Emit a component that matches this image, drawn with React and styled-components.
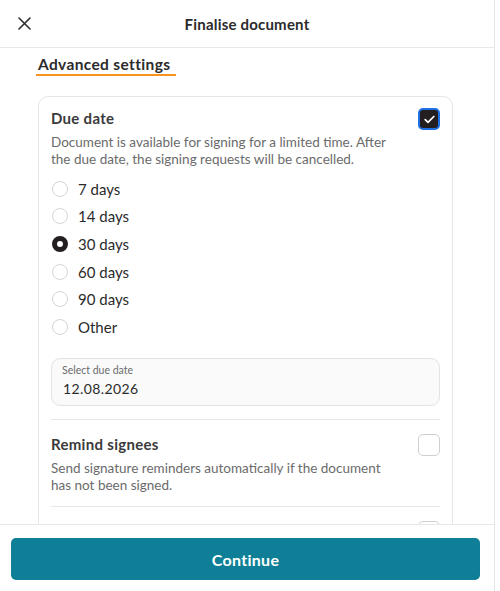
import React, { useState } from "react";
import styled, { createGlobalStyle } from "styled-components";

const GlobalStyle = createGlobalStyle`
  html, body {
    margin: 0;
    padding: 0;
    background: #ffffff;
  }
  body {
    font-family: "Lato", "Noto Sans", sans-serif;
    color: #2b2b2b;
  }
  * {
    box-sizing: border-box;
  }
`;

const Panel = styled.div`
  width: 495px;
  height: 591px;
  border-right: 1px solid #e6e6e6;
  display: flex;
  flex-direction: column;
  background: #fff;
  overflow: hidden;
`;

const Header = styled.header`
  height: 48px;
  flex-shrink: 0;
  display: grid;
  grid-template-columns: 48px 1fr 48px;
  align-items: center;
  border-bottom: 1px solid #e8e8e8;
`;

const CloseButton = styled.button`
  width: 48px;
  height: 46px;
  border: none;
  background: none;
  padding: 0;
  display: flex;
  align-items: center;
  justify-content: center;
  cursor: pointer;
  color: #2b2b2b;
`;

const HeaderTitle = styled.h1`
  margin: 0;
  text-align: center;
  font-size: 15px;
  font-weight: 700;
  color: #2b2b2b;
  letter-spacing: 0.2px;
`;

const Body = styled.div`
  flex: 1;
  overflow: hidden;
  padding: 6px 41px 0 38px;
`;

const SectionTitle = styled.h2`
  display: inline-block;
  margin: 0 0 0 -2px;
  padding: 0 6px 1px 2px;
  font-size: 15.5px;
  font-weight: 700;
  color: #2b2b2b;
  letter-spacing: 0.35px;
  border-bottom: 2px solid #f7941d;
  line-height: 18px;
`;

const Card = styled.section`
  margin-top: 20px;
  border: 1px solid #e6e6e6;
  border-radius: 10px;
  padding: 11px 12px 0 12px;
`;

const Setting = styled.div`
  padding-top: ${(p) => p.$top || "0"};
  padding-bottom: ${(p) => p.$bottom || "13px"};
  border-bottom: ${(p) => (p.$last ? "none" : "1px solid #e8e8e8")};
`;

const SettingHead = styled.div`
  display: flex;
  justify-content: space-between;
  align-items: flex-start;
  min-height: 22px;
`;

const SettingTitle = styled.h3`
  margin: 0;
  font-size: 15px;
  font-weight: 700;
  color: #3a3a3a;
  line-height: 20px;
  letter-spacing: 0.3px;
`;

const SettingText = styled.p`
  margin: 4px 0 0;
  max-width: 340px;
  font-size: 13.5px;
  line-height: 17px;
  color: #6b6b6b;
`;

const Check = styled.span`
  flex-shrink: 0;
  width: 22px;
  height: 22px;
  margin-left: auto;
  border-radius: 5px;
  display: flex;
  align-items: center;
  justify-content: center;
  background: ${(p) => (p.$on ? "#231f20" : "#fff")};
  border: ${(p) => (p.$on ? "2px solid #1f6fe5" : "1px solid #cfcfcf")};
  cursor: pointer;
`;

const RadioList = styled.div`
  margin-top: 7px;
  display: flex;
  flex-direction: column;
`;

const RadioRow = styled.label`
  height: 27.6px;
  display: flex;
  align-items: center;
  gap: 10px;
  font-size: 15px;
  color: #2b2b2b;
  cursor: pointer;
`;

const RadioDot = styled.span`
  width: 16px;
  height: 16px;
  border-radius: 50%;
  margin-left: 1px;
  border: ${(p) => (p.$on ? "5px solid #231f20" : "1px solid #d4d4d4")};
  background: #fff;
`;

const DateField = styled.div`
  margin-top: 17px;
  height: 48px;
  border: 1px solid #e3e3e3;
  border-radius: 9px;
  background: #fafafa;
  padding: 5px 10px 0;
`;

const DateLabel = styled.div`
  font-size: 10.5px;
  color: #6b6b6b;
  line-height: 13px;
`;

const DateValue = styled.div`
  margin-top: 3px;
  padding-left: 1px;
  font-size: 14px;
  color: #2b2b2b;
  letter-spacing: 0.4px;
`;

const Footer = styled.footer`
  flex-shrink: 0;
  height: 67px;
  border-top: 1px solid #e8e8e8;
  padding: 13px 14px 0 11px;
  background: #fff;
`;

const PrimaryButton = styled.button`
  width: 100%;
  height: 42px;
  border: none;
  border-radius: 5px;
  background: #0e7f96;
  color: #fff;
  font-family: inherit;
  font-size: 16px;
  font-weight: 700;
  letter-spacing: 0.3px;
  cursor: pointer;
`;

const CloseIcon = () => (
  <svg width="13" height="13" viewBox="0 0 13 13" fill="none">
    <path d="M1 1L12 12M12 1L1 12" stroke="#2b2b2b" strokeWidth="1.6" strokeLinecap="round" />
  </svg>
);

const TickIcon = () => (
  <svg width="11" height="9" viewBox="0 0 11 9" fill="none">
    <path d="M1.2 4.6L4 7.3L9.8 1.5" stroke="#fff" strokeWidth="1.7" strokeLinecap="round" strokeLinejoin="round" />
  </svg>
);

const options = ["7 days", "14 days", "30 days", "60 days", "90 days", "Other"];

export default function App() {
  const [due, setDue] = useState("30 days");

  return (
    <Panel>
      <GlobalStyle />
      <Header>
        <CloseButton aria-label="Close">
          <CloseIcon />
        </CloseButton>
        <HeaderTitle>Finalise document</HeaderTitle>
        <span />
      </Header>

      <Body>
        <SectionTitle>Advanced settings</SectionTitle>
        <Card>
          <Setting $bottom="13px">
            <SettingHead>
              <SettingTitle>Due date</SettingTitle>
              <Check $on>
                <TickIcon />
              </Check>
            </SettingHead>
            <SettingText>
              Document is available for signing for a limited time. After the due date, the signing
              requests will be cancelled.
            </SettingText>
            <RadioList>
              {options.map((o) => (
                <RadioRow key={o} onClick={() => setDue(o)}>
                  <RadioDot $on={due === o} />
                  {o}
                </RadioRow>
              ))}
            </RadioList>
            <DateField>
              <DateLabel>Select due date</DateLabel>
              <DateValue>12.08.2026</DateValue>
            </DateField>
          </Setting>

          <Setting $top="14px" $bottom="12px">
            <SettingHead>
              <SettingTitle>Remind signees</SettingTitle>
              <Check />
            </SettingHead>
            <SettingText>
              Send signature reminders automatically if the document has not been signed.
            </SettingText>
          </Setting>

          {/* next option, scrolled mostly out of view under the footer */}
          <Setting $last $top="14px" $bottom="40px">
            <SettingHead>
              <Check aria-label="Next option" />
            </SettingHead>
          </Setting>
        </Card>
      </Body>

      <Footer>
        <PrimaryButton>Continue</PrimaryButton>
      </Footer>
    </Panel>
  );
}
